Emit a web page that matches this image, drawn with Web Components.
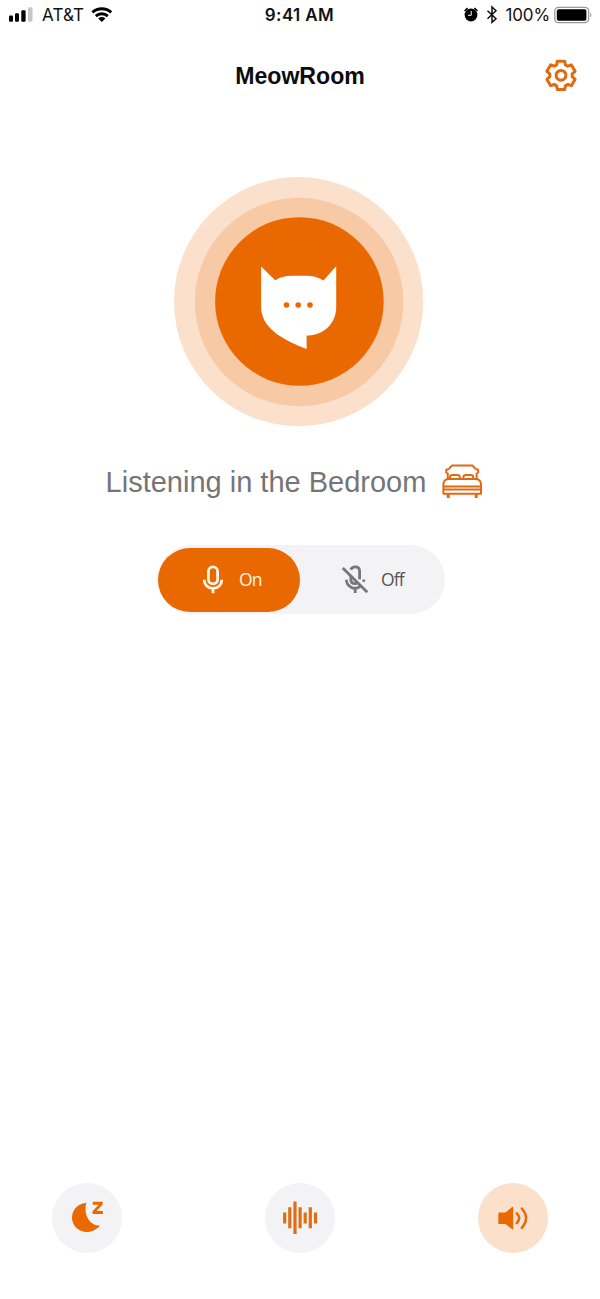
<!DOCTYPE html>
<html lang="en">
<head>
<meta charset="utf-8">
<title>MeowRoom</title>
<style>
  body {
    margin: 0;
    background: #fff;
    font-family: "Liberation Sans", Arial, sans-serif;
    --brand: #e96900;
    --brand-mid: #f8c9a5;
    --brand-soft: #fbe0cb;
    --surface: #f3f3f6;
  }
</style>
</head>
<body>
<meow-app></meow-app>

<script>
// status-bar
class StatusBar extends HTMLElement {
  constructor() {
    super();
    this.attachShadow({ mode: 'open' });
    this.shadowRoot.innerHTML = `
      <style>
        :host {
          display: grid;
          grid-template-columns: 1fr auto 1fr;
          height: 30px;
          padding: 0 7px 0 8px;
          box-sizing: border-box;
          align-items: center;
          font: 17px/30px Inter, sans-serif;
          color: #111;
        }
        div { display: flex; align-items: center; height: 30px; }
        svg { display: block; flex: none; }
        .carrier { margin: 0 7px 0 9px; letter-spacing: 0.15px; }
        .time { font-weight: 600; letter-spacing: 0.4px; margin-right: 2px; }
        .right { justify-content: flex-end; }
        .percent { margin: 0 4px 0 8px; letter-spacing: -0.15px; }
      </style>
      <div>
        <svg width="25" height="30" viewBox="0 0 25 30">
          <rect x="1" y="15.5" width="4" height="6.3" rx="1.2"/>
          <rect x="7" y="13.3" width="4" height="8.5" rx="1.2"/>
          <rect x="13.3" y="10.3" width="4.3" height="11.5" rx="1.2"/>
          <rect x="20" y="7.3" width="4.5" height="14.5" rx="1.2" fill="#c6c6c6"/>
        </svg>
        <span class="carrier">AT&amp;T</span>
        <svg width="22" height="30" viewBox="0 0 22 30">
          <g fill="none" stroke="#000" stroke-width="2.9">
            <path d="M1.4 12.4a13.8 13.8 0 0 1 18.8 0"/>
            <path d="M4.8 16.1a8.7 8.7 0 0 1 12 0"/>
          </g>
          <path d="M7.2 18.5a5.2 5.2 0 0 1 7.2 0L10.8 22z"/>
        </svg>
      </div>
      <span class="time">9:41 AM</span>
      <div class="right">
        <svg width="16" height="30" viewBox="0 0 16 30">
          <circle cx="8" cy="15" r="6.4"/>
          <path d="M1.6 11 4.6 8.2M14.4 11 11.4 8.2" stroke="#000" stroke-width="1.7"/>
          <path d="M8.2 11v4.3H5" fill="none" stroke="#fff" stroke-width="1"/>
        </svg>
        <svg width="12" height="30" viewBox="0 0 12 30" style="margin-left:7px">
          <path d="M1.5 10.8 10 18.8 6 22.4V7l4 3.8-8.5 8" fill="none" stroke="#111" stroke-width="1.5"/>
        </svg>
        <span class="percent">100%</span>
        <svg width="39" height="30" viewBox="0 0 39 30">
          <rect x=".8" y="7.3" width="33.8" height="15.4" rx="3.6" fill="none" stroke="#999" stroke-width="1.3"/>
          <rect x="2.8" y="9.3" width="29.6" height="11.4" rx="1.8"/>
          <path d="M36.2 12.2q2.4 2.8 0 5.6z" fill="#999"/>
        </svg>
      </div>
    `;
  }
}

// app-header
class AppHeader extends HTMLElement {
  constructor() {
    super();
    this.attachShadow({ mode: 'open' });
    this.shadowRoot.innerHTML = `
      <style>
        :host {
          display: grid;
          grid-template-columns: 1fr auto 1fr;
          align-items: center;
          height: 90px;
          padding: 0 22px 0 22px;
        }
        h1 { grid-column: 2; margin: 2px 0 0; font-size: 23.1px; line-height: 28px; color: #0c0c0c; }
        svg { display: block; justify-self: end; }
      </style>
      <h1><slot></slot></h1>
      <svg width="34" height="34" viewBox="-17 -17.3 34 34" fill="none" stroke="#e06a0c" stroke-width="3" stroke-linejoin="round">
        <path d="M-4.4-10.4-3.7-14.1H3.7L4.4-10.4 6.8-9.1 10.4-10.4 14.1-4 11.2-1.4V1.4L14.1 4 10.4 10.4 6.8 9.1 4.4 10.4 3.7 14.1H-3.7L-4.4 10.4-6.8 9.1-10.4 10.4-14.1 4-11.2 1.4V-1.4L-14.1-4-10.4-10.4-6.8-9.1z"/>
        <circle r="4.9"/>
      </svg>
    `;
  }
}

// meow-pulse: the logo with two rings around it
class MeowPulse extends HTMLElement {
  constructor() {
    super();
    this.attachShadow({ mode: 'open' });
    this.shadowRoot.innerHTML = `
      <style>
        :host { display: block; width: 250px; height: 250px; }
        svg { display: block; }
      </style>
      <svg width="250" height="250" viewBox="0 0 250 250">
        <circle cx="124.6" cy="124.6" r="124.6" fill="var(--brand-soft)"/>
        <circle cx="125.1" cy="125" r="104.3" fill="var(--brand-mid)"/>
        <circle cx="125.4" cy="124.5" r="84.3" fill="var(--brand)"/>
        <path fill="#fff" d="M87.1 89.6 101.2 103.2Q108 98.7 117.5 98.7h15.5q9.3 0 16.4 4.7L162.2 89.3V130C162.2 147 149 158.6 132.6 158.6V172Q116 166 103.5 157.5C92 149 87.1 140.5 87.1 129z"/>
        <g fill="var(--brand)">
          <circle cx="112.5" cy="128" r="2.8"/>
          <circle cx="124.2" cy="128" r="2.8"/>
          <circle cx="136" cy="128" r="2.8"/>
        </g>
      </svg>
    `;
  }
}

// room-status
class RoomStatus extends HTMLElement {
  constructor() {
    super();
    this.attachShadow({ mode: 'open' });
    this.shadowRoot.innerHTML = `
      <style>
        :host {
          display: flex;
          align-items: center;
          gap: 15px;
          font-size: 29px;
          line-height: 40px;
          color: #757575;
          white-space: nowrap;
        }
        svg { display: block; }
      </style>
      <slot></slot>
      <svg width="42" height="40" viewBox="0 0 42 40" fill="none" stroke="#e06a14" stroke-width="2" stroke-linejoin="round">
        <path d="M6.8 17.5V11.5L5.2 10.5V7.8Q8.6 7.2 10.8 3.5H31.6Q33.8 7.2 37.2 7.8V10.5L35.6 11.5V17.5"/>
        <path d="M9 16.5v-1.3q0-2.2 2.4-2.2h5q2.4 0 2.4 2.2v1.3M22.4 16.5v-1.3q0-2.2 2.4-2.2h5q2.4 0 2.4 2.2v1.3"/>
        <path d="M7 17h28.4q4.6 1 4.6 5.5v9.3H2.4v-9.3Q2.4 18 7 17zM2.4 24.5h37.6M2.4 27.6h37.6"/>
        <path d="M7.2 32v4M35.2 32v4" stroke-width="3"/>
      </svg>
    `;
  }
}

// mic-switch
class MicSwitch extends HTMLElement {
  constructor() {
    super();
    this.attachShadow({ mode: 'open' });
    this.shadowRoot.innerHTML = `
      <style>
        :host {
          display: flex;
          width: 288px;
          height: 69px;
          padding: 3px 3px 2px 1px;
          box-sizing: border-box;
          border-radius: 35px;
          background: var(--surface);
          font: 17.5px/24px "Open Sans", sans-serif;
          letter-spacing: -0.9px;
        }
        div {
          display: flex;
          align-items: center;
          flex: 1;
          gap: 12px;
          padding-left: 41px;
          border-radius: 32px;
          color: #555;
        }
        span { margin-bottom: 2px; }
        .on { background: var(--brand); color: #fff4e6; }
        svg { display: block; }
      </style>
      <div class="on">
        <svg width="28" height="32" viewBox="0 0 28 32" fill="none" stroke="#fff4e6" stroke-width="2.8">
          <rect x="9.4" y="2.9" width="9.2" height="17" rx="4.6"/>
          <path d="M5.2 15.8a8.8 8.6 0 0 0 17.6 0M14 24.2v5"/>
        </svg>
        <span>On</span>
      </div>
      <div>
        <svg width="28" height="32" viewBox="0 0 28 32" fill="none" stroke="#777" stroke-width="2.8">
          <path d="M9.8 5.8Q11 2.9 14.2 2.9q4.4 0 4.4 4.4v8M9.8 11.8V15.5q0 4.2 4.4 4.2 1.3 0 2.3-.6"/>
          <path d="M5.4 15.8a8.6 8.4 0 0 0 13.5 6.8M22.8 15.5q0 1.2-.4 2.3M14.2 24v5M1.8 3.9 26.3 28.3"/>
        </svg>
        <span>Off</span>
      </div>
    `;
  }
}

// round-button
class RoundButton extends HTMLElement {
  constructor() {
    super();
    this.attachShadow({ mode: 'open' });
    this.shadowRoot.innerHTML = `
      <style>
        :host {
          display: flex;
          width: 70px;
          height: 70px;
          border-radius: 50%;
          background: var(--surface);
        }
        :host([active]) { background: var(--brand-soft); }
      </style>
      <slot></slot>
    `;
  }
}

// meow-app
class MeowApp extends HTMLElement {
  constructor() {
    super();
    this.attachShadow({ mode: 'open' });
    this.shadowRoot.innerHTML = `
      <style>
        :host { display: flex; flex-direction: column; height: 1299px; }
        main { display: flex; flex-direction: column; align-items: center; flex: 1; }
        meow-pulse { margin: 56.9px 2px 0 0; }
        room-status { margin: 35px 0 0 -11px; }
        mic-switch { margin: 43px 0 0 2px; }
        nav { display: flex; justify-content: space-between; padding: 0 52px 46px; }
      </style>
      <status-bar></status-bar>
      <app-header>MeowRoom</app-header>
      <main>
        <meow-pulse></meow-pulse>
        <room-status>Listening in the Bedroom</room-status>
        <mic-switch></mic-switch>
      </main>
      <nav>
        <round-button>
          <svg width="70" height="70" viewBox="0 0 70 70" fill="#e96900">
            <path d="M34.5 19.9C26.5 20 20 26.5 20 34.5 20 42.6 26.5 49 34.8 49 40 49 44.8 46.6 47.8 42.5 39.5 43.2 32.3 34 33.6 24Q33.8 21.5 34.5 19.9z"/>
            <path d="M40.7 18.8h10v2.7L44.5 28h6.4v3H40.5v-2.8l6.2-6.4h-6z"/>
          </svg>
        </round-button>
        <round-button>
          <svg width="70" height="70" viewBox="0 0 70 70" stroke="#df6e16" stroke-width="3.2">
            <path d="M19.7 29.5v11M24.8 24.2v21M30 18.5v32.5M35.1 24.2v21M40.2 29.5v11M45.3 24.2v21M50.5 29.5v11"/>
          </svg>
        </round-button>
        <round-button active>
          <svg width="70" height="70" viewBox="0 0 70 70" fill="#e96900">
            <path d="M21.5 29.5h6L34 24q1.2-.8 1.2.8v20.6q0 1.5-1.2.7L27.5 41h-6q-1.2 0-1.2-1.2v-9q0-1.3 1.2-1.3z"/>
            <path d="M38.8 30.4q4.8 4.8 0 9.6M43.8 25.5q8.6 9.7 0 19.3" fill="none" stroke="#e06c12" stroke-width="2.5" stroke-linecap="round"/>
          </svg>
        </round-button>
      </nav>
    `;
  }
}

customElements.define('status-bar', StatusBar);
customElements.define('app-header', AppHeader);
customElements.define('meow-pulse', MeowPulse);
customElements.define('room-status', RoomStatus);
customElements.define('mic-switch', MicSwitch);
customElements.define('round-button', RoundButton);
customElements.define('meow-app', MeowApp);
</script>
</body>
</html>
